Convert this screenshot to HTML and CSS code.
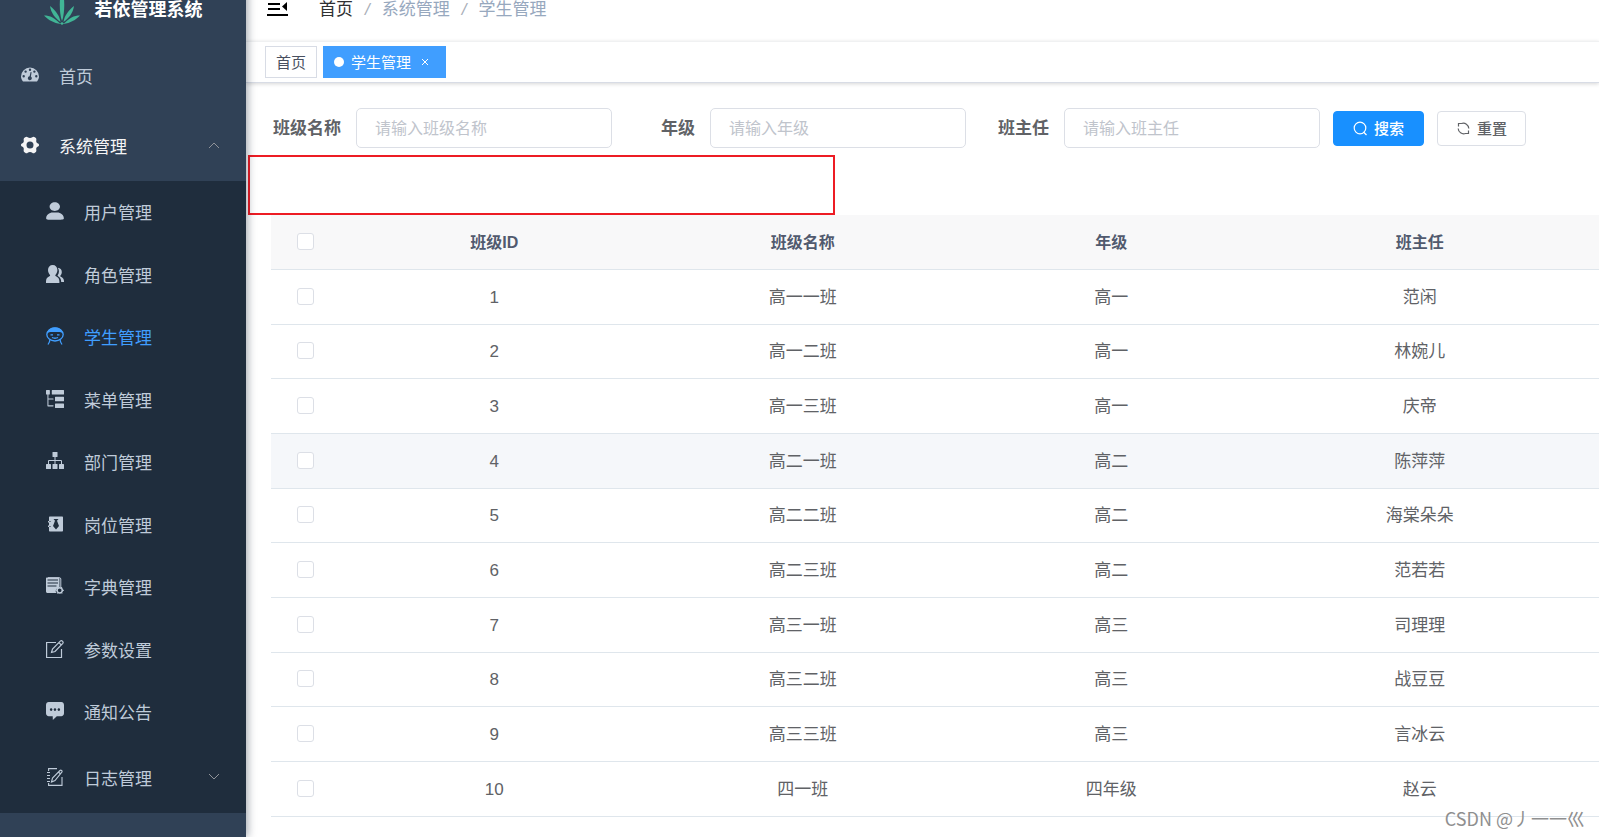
FILE: index.html
```html
<!DOCTYPE html>
<html lang="zh-CN">
<head>
<meta charset="utf-8">
<title>学生管理</title>
<link rel="stylesheet" href="styles.css">
</head>
<body>
<div class="app">
  <aside class="sidebar">
    <a class="brand" href="#">
      <svg class="brand-logo" viewBox="0 0 36 36" fill="#41b596">
        <path d="M18 32C15 24 15 8 18 0c3 8 3 24 0 32z"/>
        <path d="M16.500 33C11 29 7 24 6 17c5 4 9.500 9 10.500 16z"/>
        <path d="M19.500 33C25 29 29 24 30 17c-5 4-9.500 9-10.500 16z"/>
        <path d="M16.500 35C11 29 6 26.500 0 26.500c4 4.500 10 7.500 16.500 8.500z"/>
        <path d="M19.500 35c5.500-6 10.500-8.500 16.500-8.500-4 4.500-10 7.500-16.500 8.500z"/>
        <path d="M18 33l2 1.500-2 1.500-2-1.500z"/>
      </svg>
      <span>若依管理系统</span>
    </a>
    <nav>
      <ul class="menu">
        <li><a class="item" href="#">
          <svg class="icon" viewBox="0 0 18 18"><path fill="currentColor" fill-rule="evenodd" d="M2 15.500C.700 14 0 12.300 0 10.500a9 9 0 0 1 18 0c0 1.800-.700 3.500-2 5zM9 2.500a1.200 1.200 0 1 0 0 2.400 1.200 1.200 0 0 0 0-2.400zM4.600 4.400a1.200 1.200 0 1 0 0 2.400 1.200 1.200 0 0 0 0-2.400zm8.800 0a1.200 1.200 0 1 0 0 2.400 1.200 1.200 0 0 0 0-2.400zM2.700 9a1.200 1.200 0 1 0 0 2.400 1.200 1.200 0 0 0 0-2.400zm12.600 0a1.200 1.200 0 1 0 0 2.400 1.200 1.200 0 0 0 0-2.400zM9.600 6l-1 4.200a2 2 0 1 0 1.300.300L10.600 6.200z"/></svg>
          <span>首页</span></a></li>
        <li>
          <a class="item open" href="#">
            <svg class="icon" viewBox="0 0 18 18"><path fill="currentColor" fill-rule="evenodd" d="M4.200 1.200C5 .500 6 .500 6.700 1.200c1.300 1 3.300 1 4.600 0 .700-.700 1.700-.700 2.500 0l1.100.900c.500.500.600 1.200.400 1.900-.400 1.700.300 3 1.700 3.500.700.300 1 .700 1 1.500s-.300 1.200-1 1.500c-1.400.500-2.100 1.800-1.700 3.500.200.700.100 1.400-.400 1.900l-1.100.900c-.800.700-1.800.700-2.500 0-1.300-1-3.300-1-4.600 0-.700.700-1.700.700-2.500 0l-1.100-.900c-.500-.500-.600-1.200-.400-1.900.400-1.700-.300-3-1.700-3.500-.700-.300-1-.700-1-1.500s.300-1.200 1-1.500c1.400-.500 2.100-1.800 1.700-3.500-.2-.7-.1-1.400.4-1.900zM9 5.500a3.500 3.500 0 1 0 0 7 3.500 3.500 0 0 0 0-7z"/></svg>
            <span>系统管理</span>
            <svg class="arrow" viewBox="0 0 12 8"><path d="M1 7l5-5 5 5"/></svg>
          </a>
          <ul class="submenu">
            <li><a class="item" href="#">
              <svg class="icon" viewBox="0 0 130 130"><path fill="currentColor" d="M63.444 64.996c20.633 0 37.359-14.308 37.359-31.953 0-17.649-16.726-31.952-37.359-31.952-20.631 0-37.360 14.303-37.360 31.952 0 17.645 16.729 31.953 37.360 31.953zM80.570 75.650H49.434c-26.652 0-48.260 18.477-48.260 41.270v2.664c0 9.316 21.608 9.325 48.260 9.325H80.570c26.649 0 48.256-.344 48.256-9.325v-2.663c0-22.794-21.605-41.271-48.256-41.271z"/></svg>
              <span>用户管理</span></a></li>
            <li><a class="item" href="#">
              <svg class="icon" viewBox="0 0 18 18"><path fill="currentColor" d="M6.700 0c2.800 0 4.700 2 4.700 5 0 2-.900 3.900-2 5-.3.600 0 1 .6 1.300 2.400 1.100 3.400 2.700 3.400 5.200V18H0v-1.500c0-2.500 1-4.100 3.400-5.200.6-.3.900-.7.600-1.300C2.900 8.900 2 7 2 5c0-3 1.900-5 4.700-5z"/><path fill="currentColor" d="M11.800 2.800c2.500.200 4 1.900 4 4.200 0 1.500-.500 2.700-1.300 3.600-.4.500-.2.900.3 1.200 2.100 1 3.200 2.400 3.200 4.200v1h-2.800c0-2.800-1.300-4.900-3.500-6-.2-.2-.2-.4 0-.7 1.600-2.300 1.700-5.400.1-7.500z"/></svg>
              <span>角色管理</span></a></li>
            <li><a class="item active" href="#">
              <svg class="icon" viewBox="0 0 18 18"><g fill="none" stroke="currentColor" stroke-width="1.300"><ellipse cx="9" cy="7.500" rx="8.200" ry="6.500"/><path d="M4 12.500c-.200 2-.800 3.300-2 5M14 12.500c.200 2 .8 3.300 2 5M4.500 7.800h2.500M11 7.800h2.500M6 10.500c2 1 4 1 6 0"/></g><path fill="currentColor" d="M1 6.500C2 2 5.200.500 9 .500S16 2 17 6.500c-1.500-1.200-3-1.500-4.500-1.500h-7C4 5 2.500 5.300 1 6.500z"/></svg>
              <span>学生管理</span></a></li>
            <li><a class="item" href="#">
              <svg class="icon" viewBox="0 0 128 128"><path fill="currentColor" d="M44.800 0h79.543C126.780 0 128 1.422 128 4.267v23.466c0 2.845-1.219 4.267-3.657 4.267H44.800c-2.438 0-3.657-1.422-3.657-4.267V4.267C41.143 1.422 42.362 0 44.800 0zm22.857 48h56.686c2.438 0 3.657 1.422 3.657 4.267v23.466c0 2.845-1.219 4.267-3.657 4.267H67.657C65.220 80 64 78.578 64 75.733V52.267C64 49.422 65.219 48 67.657 48zm0 48h56.686c2.438 0 3.657 1.422 3.657 4.267v23.466c0 2.845-1.219 4.267-3.657 4.267H67.657C65.220 128 64 126.578 64 123.733v-23.466C64 97.422 65.219 96 67.657 96zM50.286 68.267c2.020 0 3.657-1.910 3.657-4.267 0-2.356-1.638-4.267-3.657-4.267H17.370V32h6.400c2.039 0 3.657-1.422 3.657-4.267V4.267C27.429 1.422 25.810 0 23.771 0H3.657C1.219 0 0 1.422 0 4.267v23.466C0 30.578 1.219 32 3.657 32h6.400v80.711c0 2.356 1.638 4.267 3.657 4.267h36.572c2.020 0 3.657-1.910 3.657-4.267 0-2.356-1.638-4.267-3.657-4.267H17.370V68.267h32.915z"/></svg>
              <span>菜单管理</span></a></li>
            <li><a class="item" href="#">
              <svg class="icon" viewBox="0 0 18 18"><g fill="currentColor"><rect x="6.500" y="0" width="5" height="5" rx=".5"/><rect x="0" y="12" width="5" height="5" rx=".5"/><rect x="6.500" y="12" width="5" height="5" rx=".5"/><rect x="13" y="12" width="5" height="5" rx=".5"/></g><path fill="none" stroke="currentColor" d="M9 5v7M2.500 12V8.500h13V12"/></svg>
              <span>部门管理</span></a></li>
            <li><a class="item" href="#">
              <svg class="icon" viewBox="0 0 18 18"><path fill="currentColor" fill-rule="evenodd" d="M4 1.500h12c.6 0 1 .4 1 1v13c0 .6-.4 1-1 1H4c-.6 0-1-.4-1-1v-13c0-.6.4-1 1-1zM7.500 4l1.500 1.700L7 11l3 3.500 3-3.500-2-5.300L12.500 4z"/><path stroke="#1f2d3d" d="M3 6.500h1.500M3 11.500h1.500"/><path stroke="currentColor" stroke-width="1.400" d="M2 6.700h1.500M2 11.300h1.500"/></svg>
              <span>岗位管理</span></a></li>
            <li><a class="item" href="#">
              <svg class="icon" viewBox="0 0 18 18"><path fill="currentColor" fill-rule="evenodd" d="M1 .500h11.500c.6 0 1 .4 1 1V10l-3 2-1 2 1 2H1.500C.700 16 0 15.300 0 14.500v-13c0-.6.400-1 1-1zM1.500 2.500v1h10.500v-1zm0 3v1h10.500v-1zm0 3v1h9v-1z"/><path fill="none" stroke="currentColor" d="M2 .700h11.500c.8 0 1.300.5 1.300 1.300v8"/><circle cx="13.700" cy="13.300" r="2.600" fill="none" stroke="currentColor" stroke-width="1.500"/><path stroke="currentColor" d="M9.500 13.300h1.500M16.500 13.300H18M11.500 10l1 1.200M16 10l-1 1.200M11.500 16.500l1-1M16 16.500l-1-1"/></svg>
              <span>字典管理</span></a></li>
            <li><a class="item" href="#">
              <svg class="icon" viewBox="0 0 18 18"><g fill="none" stroke="currentColor" stroke-width="1.200"><path d="M10 2.500H.600v15H15.500V9"/><path d="M5.500 12.500l1-3.500L14.500.900c.6-.4 1.300-.3 1.900.3l.2.200c.6.600.7 1.300.2 1.900L9 11.500zM13 2.700l2.300 2.300"/></g></svg>
              <span>参数设置</span></a></li>
            <li><a class="item" href="#">
              <svg class="icon" viewBox="0 0 128 128"><path fill="currentColor" d="M0 20.967v59.590c0 11.590 8.537 20.966 19.075 20.966h28.613l1 26.477L76.800 101.523h32.125c10.538 0 19.075-9.377 19.075-20.966v-59.590C128 9.377 119.463 0 108.925 0h-89.850C8.538 0 0 9.377 0 20.967zm82.325 33.100c0-5.524 4.013-9.935 9.037-9.935 5.026 0 9.038 4.410 9.038 9.934 0 5.524-4.025 9.934-9.038 9.934-5.024 0-9.037-4.410-9.037-9.934zm-27.613 0c0-5.524 4.013-9.935 9.038-9.935s9.037 4.410 9.037 9.934c0 5.524-4.012 9.934-9.037 9.934s-9.038-4.410-9.038-9.934zm-27.100 0c0-5.524 4.013-9.935 9.038-9.935s9.037 4.410 9.037 9.934c0 5.524-4.012 9.934-9.037 9.934s-9.038-4.410-9.038-9.934z"/></svg>
              <span>通知公告</span></a></li>
            <li><a class="item tall" href="#">
              <svg class="icon" viewBox="0 0 18 18"><g fill="none" stroke="currentColor" stroke-width="1.100"><path d="M11 .600H2.600V3M2.600 15v2.400H16V9M1 4.500h3M1 7.500h3M1 10.500h3M1 13.500h3"/><path d="M5.500 14l1-4L14 2.500c.5-.5 1.100-.4 1.600 0 .6.500.7 1.200.2 1.700L9 12.500zM12.500 4l2 2"/></g></svg>
              <span>日志管理</span>
              <svg class="arrow" viewBox="0 0 12 8"><path d="M1 1l5 5 5-5"/></svg>
            </a></li>
          </ul>
        </li>
      </ul>
    </nav>
  </aside>

  <div class="main">
    <header class="navbar">
      <button class="fold" type="button" aria-label="收起菜单">
        <svg viewBox="0 0 21 18"><path fill="none" stroke="#000" stroke-width="2" d="M0 1h21M1 6h12M1 11h12M0 17h21"/><path d="M20 4v9l-5-4.500z"/></svg>
      </button>
      <nav class="crumbs">
        <a href="#">首页</a><i>/</i><span>系统管理</span><i>/</i><span>学生管理</span>
      </nav>
    </header>
    <div class="tags">
      <a class="tag" href="#"><span>首页</span></a>
      <a class="tag current" href="#"><i class="dot"></i><span>学生管理</span><svg class="close" viewBox="0 0 8 8"><path d="M1 1l6 6M7 1L1 7"/></svg></a>
    </div>

    <main class="content">
      <form class="search">
        <div class="field"><label for="cname">班级名称</label><input id="cname" type="text" placeholder="请输入班级名称"></div>
        <div class="field"><label for="grade">年级</label><input id="grade" type="text" placeholder="请输入年级"></div>
        <div class="field"><label for="teacher">班主任</label><input id="teacher" type="text" placeholder="请输入班主任"></div>
        <button class="btn primary" type="button"><svg viewBox="0 0 15 15"><circle cx="7" cy="7" r="5.800"/><path d="M10.500 11l3 3"/></svg><span>搜索</span></button>
        <button class="btn" type="button"><svg viewBox="0 0 15 15"><path d="M5.500 2.500A5.500 5.500 0 0 1 12.800 7.500M2.200 7.500A5.500 5.500 0 0 0 9.500 12.500M2.500 5.500V2.500h3M12.500 9.500v3h-3"/></svg><span>重置</span></button>
      </form>
      <div class="mark"></div>
      <table class="grid">
        <colgroup><col class="pick"><col><col><col><col><col class="rest"></colgroup>
        <thead>
          <tr><th><input type="checkbox" aria-label="全选"></th><th>班级ID</th><th>班级名称</th><th>年级</th><th>班主任</th><th></th></tr>
        </thead>
        <tbody>
          <tr><td><input type="checkbox" aria-label="选择 1"></td><td>1</td><td>高一一班</td><td>高一</td><td>范闲</td><td></td></tr>
          <tr><td><input type="checkbox" aria-label="选择 2"></td><td>2</td><td>高一二班</td><td>高一</td><td>林婉儿</td><td></td></tr>
          <tr><td><input type="checkbox" aria-label="选择 3"></td><td>3</td><td>高一三班</td><td>高一</td><td>庆帝</td><td></td></tr>
          <tr class="hover"><td><input type="checkbox" aria-label="选择 4"></td><td>4</td><td>高二一班</td><td>高二</td><td>陈萍萍</td><td></td></tr>
          <tr><td><input type="checkbox" aria-label="选择 5"></td><td>5</td><td>高二二班</td><td>高二</td><td>海棠朵朵</td><td></td></tr>
          <tr><td><input type="checkbox" aria-label="选择 6"></td><td>6</td><td>高二三班</td><td>高二</td><td>范若若</td><td></td></tr>
          <tr><td><input type="checkbox" aria-label="选择 7"></td><td>7</td><td>高三一班</td><td>高三</td><td>司理理</td><td></td></tr>
          <tr><td><input type="checkbox" aria-label="选择 8"></td><td>8</td><td>高三二班</td><td>高三</td><td>战豆豆</td><td></td></tr>
          <tr><td><input type="checkbox" aria-label="选择 9"></td><td>9</td><td>高三三班</td><td>高三</td><td>言冰云</td><td></td></tr>
          <tr><td><input type="checkbox" aria-label="选择 10"></td><td>10</td><td>四一班</td><td>四年级</td><td>赵云</td><td></td></tr>
        </tbody>
      </table>
    </main>
  </div>
</div>
<div class="watermark">CSDN @丿一一巛</div>
</body>
</html>
```
FILE: styles.css
```css
* { box-sizing: border-box; }

body {
  margin: 0;
  height: 100vh;
  overflow: hidden;
  position: relative;
  background: #fff;
  color: #606266;
  font: 17px/24px "Liberation Sans", "Noto Sans CJK SC", sans-serif;
}

a { color: inherit; text-decoration: none; }
ul { margin: 0; padding: 0; list-style: none; }
button, input { font: inherit; }

/* The page is scrolled slightly, so the top bars are cut by the window */
.app {
  display: flex;
  min-height: calc(100vh + 21px);
  margin-top: -21px;
}

/* Sidebar */
.sidebar {
  position: relative;
  z-index: 2;
  flex: 0 0 246px;
  background: #304156;
  color: #bfcbd9;
  box-shadow: 2px 0 8px rgba(0, 21, 41, .35);
}
.brand {
  display: flex;
  align-items: center;
  justify-content: center;
  gap: 15px;
  height: 62px;
  color: #fff;
  font-size: 18px;
  font-weight: 700;
}
.brand-logo { width: 36px; height: 36px; margin-bottom: 6px; }
.item {
  display: flex;
  align-items: center;
  gap: 20px;
  height: 70px;
  padding: 0 26px 0 21px;
}
.item span { padding-top: 4px; }
.item svg { margin-bottom: 2px; }
.item.open { color: #f4f4f5; }
.icon { flex: none; width: 18px; height: 18px; }
.arrow {
  width: 12px;
  height: 8px;
  margin-left: auto;
  fill: none;
  stroke: #909399;
  stroke-width: 1;
}
.submenu { background: #1f2d3d; }
.submenu .item { height: 62px; padding-left: 46px; }
.submenu li:nth-child(even) .item { height: 63px; }
.submenu li .item.tall { height: 70px; }
.item.active { color: #409eff; }

/* Top bars */
.main { flex: 1; min-width: 0; }
.navbar {
  display: flex;
  align-items: center;
  gap: 31px;
  height: 62px;
  padding: 0 21px;
}
.fold { padding: 0; border: 0; background: none; line-height: 0; margin-bottom: 6px; }
.fold svg { width: 21px; height: 18px; }
.crumbs { display: flex; gap: 12px; color: #97a8be; }
.crumbs a { color: #303133; }
.crumbs i { color: #a8aeb8; }
.tags {
  display: flex;
  align-items: center;
  gap: 6px;
  height: 42px;
  padding: 0 19px;
  border-top: 1px solid #f0f1f2;
  border-bottom: 1px solid #d8dce5;
  box-shadow: 0 1px 4px rgba(0, 0, 0, .16);
  font-size: 15px;
}
.tag {
  display: flex;
  align-items: center;
  height: 32px;
  padding: 0 10px;
  border: 1px solid #d8dce5;
  color: #495060;
}
.tag span, .btn span { padding-top: 2px; }
.tag.current {
  padding-right: 16px;
  border-color: #409eff;
  background: #409eff;
  color: #fff;
}
.dot { width: 10px; height: 10px; margin-right: 7px; border-radius: 50%; background: #fff; }
.close { width: 8px; height: 8px; margin-left: 10px; stroke: #fff; }

/* Search form */
.content { position: relative; padding: 25px 0 0 25px; }
.search {
  display: flex;
  align-items: center;
  gap: 13px;
  margin-bottom: 67px;
}
.field { display: flex; align-items: center; }
.field label {
  width: 85px;
  padding: 2px 15px 0 0;
  font-weight: 700;
  text-align: right;
  white-space: nowrap;
}
.field input {
  width: 256px;
  height: 40px;
  padding: 2px 18px 0;
  border: 1px solid #dcdfe6;
  border-radius: 5px;
  font-size: 16px;
}
.field input::placeholder { color: #c0c4cc; }
.btn {
  display: flex;
  align-items: center;
  gap: 6px;
  height: 35px;
  padding: 0 18px;
  border: 1px solid #dcdfe6;
  border-radius: 4px;
  background: #fff;
  color: #606266;
  font-size: 15px;
  font-weight: 500;
}
.btn svg { width: 15px; height: 15px; fill: none; stroke: currentColor; stroke-width: 1.2; }
.btn.primary { padding: 0 19px; border-color: #1890ff; background: #1890ff; color: #fff; }

/* Red highlight frame over the empty toolbar */
.mark {
  position: absolute;
  top: 72px;
  left: 2px;
  width: 587px;
  height: 60px;
  border: 2px solid #ed1c24;
}

/* Data table */
.grid {
  width: 100%;
  border-collapse: separate;
  border-spacing: 0;
  table-layout: fixed;
  text-align: center;
}
.pick { width: 69px; }
.rest { width: 25px; }
.grid th, .grid td { height: 55px; padding: 1px 0 0; border-bottom: 1px solid #dfe6ec; }
.grid th:first-child, .grid td:first-child { padding: 0 0 2px; }
.grid tbody tr:nth-child(3n + 2) td { height: 54px; }
.grid th { background: #f8f8f9; color: #515a6e; font-size: 16px; font-weight: 700; }
.grid .hover td { background: #f5f7fa; }
.grid input {
  display: block;
  appearance: none;
  width: 17px;
  height: 17px;
  margin: 0 auto;
  border: 1px solid #dcdfe6;
  border-radius: 3px;
  background: #fff;
}

.watermark {
  position: absolute;
  right: 14px;
  bottom: 7px;
  z-index: 3;
  color: #8f8f8f;
  font-size: 18px;
  font-family: "Noto Sans CJK SC", sans-serif;
}
```
